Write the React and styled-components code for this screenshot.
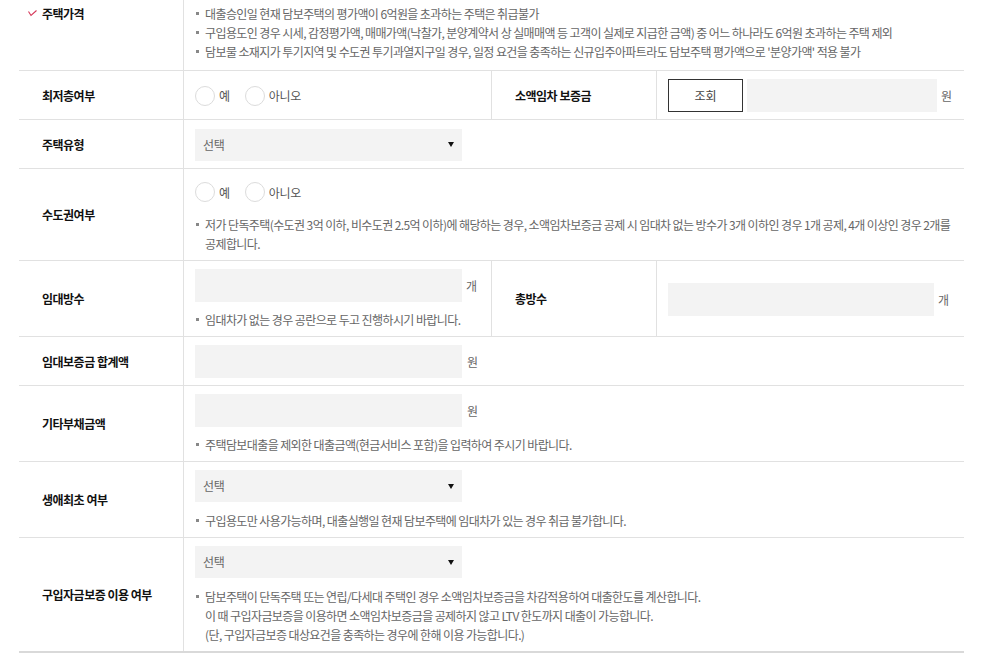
import React from "react";
import styled, { createGlobalStyle } from "styled-components";

const GlobalStyle = createGlobalStyle`
  body {
    margin: 0;
    background: #fff;
    font-family: "Noto Sans CJK KR", "Noto Sans", sans-serif;
    color: #111;
  }
`;

const Table = styled.div`
  margin-left: 19px;
  width: 945px;
  border-bottom: 2px solid #d9d9d9;
`;

const Row = styled.div`
  display: grid;
  grid-template-columns: ${(p) => (p.$split ? "165px 308px 165px 1fr" : "165px 1fr")};
  min-height: 48px;
  border-bottom: ${(p) => (p.$last ? "none" : "1px solid #e1e1e1")};
`;

const Label = styled.div`
  display: flex;
  align-items: ${(p) => (p.$top ? "flex-start" : "center")};
  padding: ${(p) => (p.$top ? "4px 0 0 9px" : "0 0 0 23px")};
  border-right: 1px solid #e1e1e1;
  font-size: 12px;
  line-height: 19px;
  font-weight: 700;
  letter-spacing: -0.5px;
  color: #111;
  gap: 5px;
`;

const CheckMark = styled.span`
  display: flex;
  align-items: center;
  height: 19px;
  flex: none;
`;

const Cell = styled.div`
  display: flex;
  flex-direction: column;
  justify-content: center;
  gap: ${(p) => p.$gap || 8}px;
  padding: ${(p) => (p.$top ? "4px 11px 9px" : "8px 11px 7px")};
  border-right: ${(p) => (p.$divider ? "1px solid #e1e1e1" : "none")};
`;

const Line = styled.div`
  display: flex;
  align-items: center;
  gap: ${(p) => p.$gap || 5}px;
`;

const Notes = styled.ul`
  margin: 0;
  padding: 0;
  list-style: none;
`;

const Note = styled.li`
  display: flex;
  font-size: 12px;
  line-height: 19px;
  letter-spacing: -0.6px;
  color: #666;

  &::before {
    content: "";
    flex: none;
    width: 3px;
    height: 3px;
    margin: 8px 6px 0 1px;
    background: #888;
  }
`;

const Radios = styled.div`
  display: flex;
  align-items: center;
  gap: 15px;
  height: ${(p) => p.$h || 20}px;
`;

const Radio = styled.label`
  display: flex;
  align-items: center;
  gap: 4px;
  font-size: 12px;
  letter-spacing: -0.3px;
  color: #555;
`;

const Circle = styled.span`
  width: 18px;
  height: 18px;
  border: 1px solid #dcdcdc;
  border-radius: 50%;
  background: #fff;
`;

const Field = styled.div`
  width: ${(p) => p.$w || 267}px;
  height: 33px;
  background: #f3f3f3;
`;

const Unit = styled.span`
  font-size: 12px;
  color: #666;
`;

const Select = styled.div`
  display: flex;
  align-items: center;
  justify-content: space-between;
  box-sizing: border-box;
  width: 267px;
  height: 32px;
  padding: 0 8px;
  background: #f3f3f3;
  font-size: 12px;
  line-height: 16px;
  letter-spacing: -0.3px;
  color: #666;
`;

const Button = styled.button`
  box-sizing: border-box;
  width: 75px;
  height: 33px;
  border: 1px solid #333;
  background: #fff;
  font-family: inherit;
  font-size: 12px;
  color: #444;
  padding: 0;
`;

const Arrow = () => (
  <svg width="6" height="5" viewBox="0 0 6 5">
    <polygon points="0,0 6,0 3,5" fill="#111" />
  </svg>
);

const SelectBox = () => (
  <Select>
    <span>선택</span>
    <Arrow />
  </Select>
);

const YesNo = ({ h }) => (
  <Radios $h={h}>
    <Radio>
      <Circle />예
    </Radio>
    <Radio>
      <Circle />아니오
    </Radio>
  </Radios>
);

export default function App() {
  return (
    <>
      <GlobalStyle />
      <Table>
        <Row>
          <Label $top>
            <CheckMark>
              <svg width="9" height="7" viewBox="0 0 9 7">
                <polyline points="0.5,1.5 3,5.5 8.5,0.5" fill="none" stroke="#d6395a" strokeWidth="1.1" />
              </svg>
            </CheckMark>
            주택가격
          </Label>
          <Cell $top>
            <Notes>
              <Note>대출승인일 현재 담보주택의 평가액이 6억원을 초과하는 주택은 취급불가</Note>
              <Note>구입용도인 경우 시세, 감정평가액, 매매가액(낙찰가, 분양계약서 상 실매매액 등 고객이 실제로 지급한 금액) 중 어느 하나라도 6억원 초과하는 주택 제외</Note>
              <Note>담보물 소재지가 투기지역 및 수도권 투기과열지구일 경우, 일정 요건을 충족하는 신규입주아파트라도 담보주택 평가액으로 '분양가액' 적용 불가</Note>
            </Notes>
          </Cell>
        </Row>

        <Row $split>
          <Label>최저층여부</Label>
          <Cell $divider>
            <YesNo />
          </Cell>
          <Label>소액임차 보증금</Label>
          <Cell>
            <Line $gap={4}>
              <Button>조회</Button>
              <Field $w={190} />
              <Unit>원</Unit>
            </Line>
          </Cell>
        </Row>

        <Row>
          <Label>주택유형</Label>
          <Cell>
            <SelectBox />
          </Cell>
        </Row>

        <Row>
          <Label>수도권여부</Label>
          <Cell>
            <YesNo h={30} />
            <Notes>
              <Note>
                <span>
                  저가 단독주택(수도권 3억 이하, 비수도권 2.5억 이하)에 해당하는 경우, 소액임차보증금 공제 시 임대차 없는 방수가 3개 이하인 경우 1개 공제, 4개 이상인 경우 2개를
                  <br />
                  공제합니다.
                </span>
              </Note>
            </Notes>
          </Cell>
        </Row>

        <Row $split>
          <Label>임대방수</Label>
          <Cell $divider>
            <Line $gap={4}>
              <Field />
              <Unit>개</Unit>
            </Line>
            <Notes>
              <Note>임대차가 없는 경우 공란으로 두고 진행하시기 바랍니다.</Note>
            </Notes>
          </Cell>
          <Label>총방수</Label>
          <Cell>
            <Line $gap={4}>
              <Field $w={266} />
              <Unit>개</Unit>
            </Line>
          </Cell>
        </Row>

        <Row>
          <Label>임대보증금 합계액</Label>
          <Cell>
            <Line>
              <Field />
              <Unit>원</Unit>
            </Line>
          </Cell>
        </Row>

        <Row>
          <Label>기타부채금액</Label>
          <Cell>
            <Line>
              <Field />
              <Unit>원</Unit>
            </Line>
            <Notes>
              <Note>주택담보대출을 제외한 대출금액(현금서비스 포함)을 입력하여 주시기 바랍니다.</Note>
            </Notes>
          </Cell>
        </Row>

        <Row>
          <Label>생애최초 여부</Label>
          <Cell $gap={9}>
            <SelectBox />
            <Notes>
              <Note>구입용도만 사용가능하며, 대출실행일 현재 담보주택에 임대차가 있는 경우 취급 불가합니다.</Note>
            </Notes>
          </Cell>
        </Row>

        <Row $last>
          <Label>구입자금보증 이용 여부</Label>
          <Cell $gap={9}>
            <SelectBox />
            <Notes>
              <Note>
                <span>
                  담보주택이 단독주택 또는 연립/다세대 주택인 경우 소액임차보증금을 차감적용하여 대출한도를 계산합니다.
                  <br />
                  이 때 구입자금보증을 이용하면 소액임차보증금을 공제하지 않고 LTV 한도까지 대출이 가능합니다.
                  <br />
                  (단, 구입자금보증 대상요건을 충족하는 경우에 한해 이용 가능합니다.)
                </span>
              </Note>
            </Notes>
          </Cell>
        </Row>
      </Table>
    </>
  );
}
